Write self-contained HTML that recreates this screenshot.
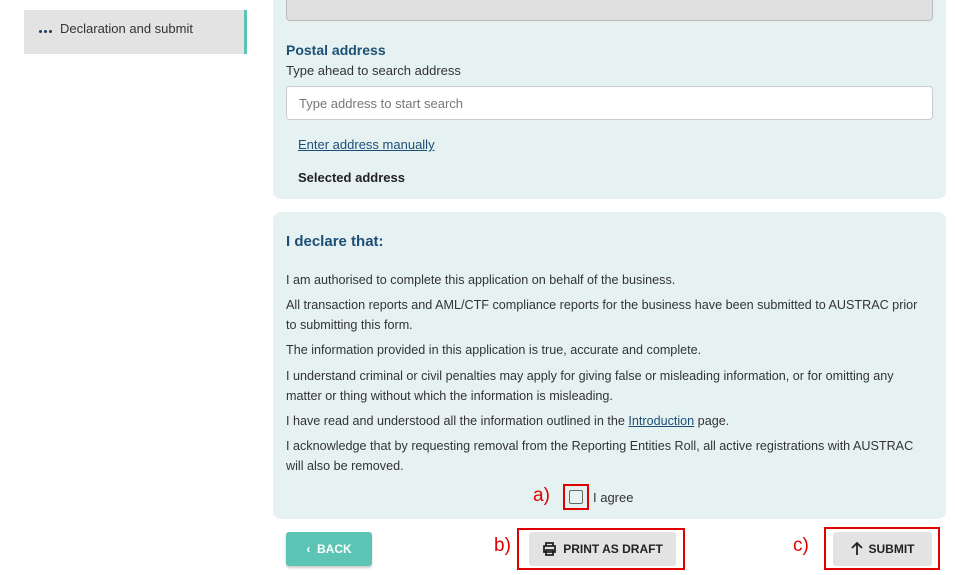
<!DOCTYPE html>
<html><head><style>
body{margin:0;width:955px;height:575px;background:#fff;font-family:"Liberation Sans",sans-serif;position:relative;overflow:hidden;color:#333}
.a{position:absolute}
.nav{left:24px;top:10px;width:220px;height:44px;background:#e3e3e3;border-right:3px solid #5cc4b4}
.nav span{position:absolute;left:36px;top:11px;font-size:13px;color:#333}
.dot{position:absolute;top:20px;width:3px;height:3px;border-radius:50%;background:#1d3b5e}
.p1{left:273px;top:-10px;width:673px;height:209px;background:#e6f2f2;border-radius:8px}
.p2{left:273px;top:212px;width:673px;height:307px;background:#e6f2f2;border-radius:8px}
.grey{left:286px;top:-5px;width:645px;height:24px;background:#e0e0e0;border:1px solid #bbb;border-radius:4px}
.t{font-size:13px;line-height:19.5px;white-space:nowrap}
.btn{position:absolute;border-radius:3px;font-size:12px;font-weight:bold;text-align:center;line-height:34px;height:34px;box-shadow:0 2px 2px rgba(0,0,0,.2)}
.btn svg{vertical-align:middle;margin-right:6px;position:relative;top:-1px}
.red{position:absolute;border:2px solid #e00000;box-sizing:border-box}
.lbl{position:absolute;color:#e00000;font-size:19px}
</style></head><body>
<div class="a nav"><i class="dot" style="left:15px"></i><i class="dot" style="left:20px"></i><i class="dot" style="left:25px"></i><span>Declaration and submit</span></div>
<div class="a p1"></div>
<div class="a grey"></div>
<div class="a t" style="left:286px;top:41px;font-weight:bold;color:#1d4f76;font-size:14px">Postal address</div>
<div class="a t" style="left:286px;top:61px">Type ahead to search address</div>
<div class="a" style="left:286px;top:86px;width:645px;height:32px;background:#fff;border:1px solid #ccc;border-radius:4px"></div>
<div class="a t" style="left:299px;top:94px;color:#777">Type address to start search</div>
<div class="a t" style="left:298px;top:135px;color:#1d4f76;text-decoration:underline">Enter address manually</div>
<div class="a t" style="left:298px;top:168px;font-weight:bold;color:#222">Selected address</div>
<div class="a p2"></div>
<div class="a" style="left:286px;top:233px;font-size:15px;font-weight:bold;color:#1d4f76">I declare that:</div>
<div class="a t" style="left:286px;top:271px;font-size:12.6px">I am authorised to complete this application on behalf of the business.</div>
<div class="a t" style="left:286px;top:296px;font-size:12.6px">All transaction reports and AML/CTF compliance reports for the business have been submitted to AUSTRAC prior<br>to submitting this form.</div>
<div class="a t" style="left:286px;top:341px;font-size:12.6px">The information provided in this application is true, accurate and complete.</div>
<div class="a t" style="left:286px;top:367px;font-size:12.6px">I understand criminal or civil penalties may apply for giving false or misleading information, or for omitting any<br>matter or thing without which the information is misleading.</div>
<div class="a t" style="left:286px;top:412px;font-size:12.6px">I have read and understood all the information outlined in the <span style="color:#1d4f76;text-decoration:underline">Introduction</span> page.</div>
<div class="a t" style="left:286px;top:437px;font-size:12.6px">I acknowledge that by requesting removal from the Reporting Entities Roll, all active registrations with AUSTRAC<br>will also be removed.</div>
<div class="lbl" style="left:533px;top:485px">a)</div>
<div class="red" style="left:563px;top:484px;width:26px;height:26px"></div>
<div class="a" style="left:569px;top:490px;width:12px;height:12px;border:1.5px solid #666;border-radius:2px"></div>
<div class="a t" style="left:593px;top:488px">I agree</div>
<div class="btn" style="left:286px;top:532px;width:86px;background:#5cc4b4;color:#fff">&lsaquo;&nbsp;&nbsp;BACK</div>
<div class="lbl" style="left:494px;top:535px">b)</div>
<div class="red" style="left:517px;top:528px;width:168px;height:42px"></div>
<div class="btn" style="left:529px;top:532px;width:147px;background:#e3e3e3;color:#222;box-shadow:none"><svg width="15" height="14" viewBox="0 0 15 14" fill="none" stroke="#222" stroke-width="1.8"><path d="M4 4V1h7v3M2 4h11v6H2zM4 8h7v5H4z"/></svg>PRINT AS DRAFT</div>
<div class="lbl" style="left:793px;top:535px">c)</div>
<div class="red" style="left:824px;top:527px;width:116px;height:43px"></div>
<div class="btn" style="left:833px;top:532px;width:99px;background:#e3e3e3;color:#222;box-shadow:none"><svg width="12" height="13" viewBox="0 0 12 13" fill="none" stroke="#222" stroke-width="1.8"><path d="M6 13V1M1 6l5-5 5 5"/></svg>SUBMIT</div>
</body></html>
